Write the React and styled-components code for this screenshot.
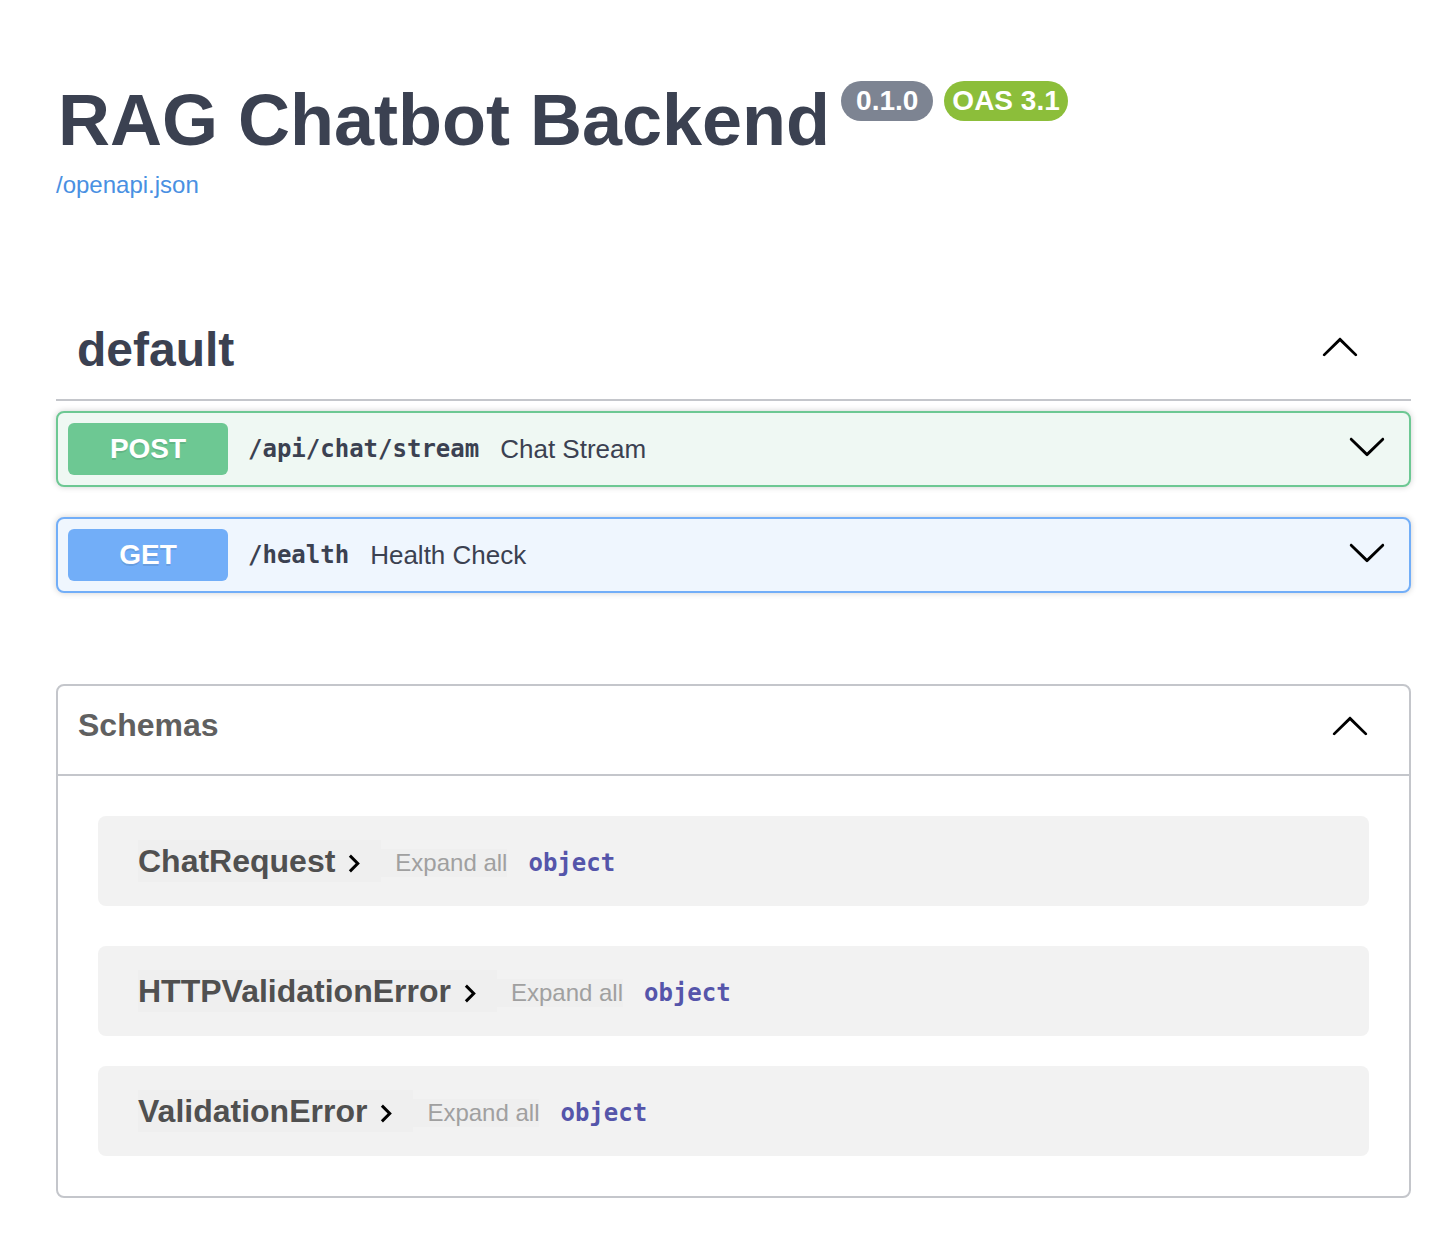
import React from 'react'
import styled, { createGlobalStyle } from 'styled-components'

const GlobalStyle = createGlobalStyle`
	body {
		margin: 0;
		background: #fff;
		font-family: 'Liberation Sans', Arial, sans-serif;
		color: #3b4151;
	}
`

const methods = {
	post: { main: '#6dc893', bg: '#eff8f3' },
	get: { main: '#72aef8', bg: '#eff6fe' },
}

const operations = [
	{ method: 'post', path: '/api/chat/stream', summary: 'Chat Stream' },
	{ method: 'get', path: '/health', summary: 'Health Check' },
]

const schemas = ['ChatRequest', 'HTTPValidationError', 'ValidationError']

const ArrowUp = ({ size = 40 }) => (
	<svg width={size} height={size} viewBox='0 0 20 20' fill='#000'>
		<path d='M17.418 14.908c.272.268.709.268.979 0s.271-.701 0-.969l-7.908-7.83c-.27-.268-.707-.268-.979 0l-7.908 7.83c-.27.268-.27.701 0 .969.271.268.709.268.979 0L10 7.767l7.418 7.141z' />
	</svg>
)

const ArrowDown = ({ size = 40 }) => (
	<svg width={size} height={size} viewBox='0 0 20 20' fill='#000'>
		<path d='M17.418 6.109c.272-.268.709-.268.979 0s.271.701 0 .969l-7.908 7.83c-.27.268-.707.268-.979 0l-7.908-7.83c-.27-.268-.27-.701 0-.969.271-.268.709-.268.979 0L10 13.25l7.418-7.141z' />
	</svg>
)

const Chevron = () => (
	<svg width='13' height='19' viewBox='8.2 5.6 8.4 12.8' fill='#000'>
		<path d='M10 6L8.59 7.41 13.17 12l-4.58 4.59L10 18l6-6z' />
	</svg>
)

const App = () => {
	return (
		<Page>
			<GlobalStyle />
			<Info>
				<TitleRow>
					<Title>RAG Chatbot Backend</Title>
					<Badge color='#7d8492' pad={15}>0.1.0</Badge>
					<Badge color='#8cbe3a' pad={8}>OAS 3.1</Badge>
				</TitleRow>
				<SpecLink href='#'>/openapi.json</SpecLink>
			</Info>

			<TagRow>
				<TagName>default</TagName>
				<TagArrow>
					<ArrowUp />
				</TagArrow>
			</TagRow>

			<Operations>
				{operations.map((op) => (
					<Opblock key={op.path} method={op.method}>
						<Method method={op.method}>{op.method.toUpperCase()}</Method>
						<Path>{op.path}</Path>
						<Summary>{op.summary}</Summary>
						<OpArrow>
							<ArrowDown />
						</OpArrow>
					</Opblock>
				))}
			</Operations>

			<Models>
				<ModelsHeader>
					<ModelsTitle>Schemas</ModelsTitle>
					<ModelsArrow>
						<ArrowUp />
					</ModelsArrow>
				</ModelsHeader>
				<ModelsBody>
					{schemas.map((name) => (
						<ModelContainer key={name}>
							<ModelTitle>
								{name}
								<Chevron />
							</ModelTitle>
							<ExpandAll>Expand all</ExpandAll>
							<PropType>object</PropType>
						</ModelContainer>
					))}
				</ModelsBody>
			</Models>
		</Page>
	)
}

const Page = styled.div`
	padding: 0 37px 62px 56px;
`

const Info = styled.div`
	padding-top: 80px;
	margin-bottom: 103px;
	display: flex;
	flex-direction: column;
	align-items: flex-start;
`

const TitleRow = styled.div`
	display: flex;
	align-items: flex-start;
`

const Title = styled.h2`
	margin: 0 11px 0 2px;
	font-size: 72px;
	line-height: 80px;
	font-weight: 700;
	color: #3b4151;
`

const Badge = styled.span`
	margin: 1px 11px 0 0;
	padding: 0 ${(p) => p.pad}px;
	height: 40px;
	line-height: 40px;
	border-radius: 20px;
	background: ${(p) => p.color};
	color: #fff;
	font-size: 28px;
	font-weight: 700;
`

const SpecLink = styled.a`
	margin-top: 11px;
	font-size: 24px;
	line-height: 28px;
	color: #4990e2;
	text-decoration: none;
`

const TagRow = styled.div`
	display: flex;
	align-items: flex-start;
	padding: 20px 51px 21px 21px;
	border-bottom: 2px solid #c4c6cb;
`

const TagName = styled.h3`
	flex: 1;
	margin: 0;
	font-size: 48px;
	line-height: 56px;
	font-weight: 700;
	color: #3b4151;
`

const TagArrow = styled.div`
	display: flex;
	margin-top: 4px;
`

const Operations = styled.div`
	display: flex;
	flex-direction: column;
	gap: 30px;
	margin-top: 10px;
`

const Opblock = styled.div`
	display: flex;
	align-items: center;
	padding: 10px 22px 10px 10px;
	border: 2px solid ${(p) => methods[p.method].main};
	border-radius: 8px;
	background: ${(p) => methods[p.method].bg};
	box-shadow: 0 0 6px rgba(0, 0, 0, 0.19);
`

const Method = styled.span`
	width: 160px;
	height: 52px;
	line-height: 52px;
	border-radius: 6px;
	background: ${(p) => methods[p.method].main};
	color: #fff;
	font-size: 28px;
	font-weight: 700;
	text-align: center;
	text-shadow: 0 2px 0 rgba(0, 0, 0, 0.1);
`

const Path = styled.span`
	margin-left: 20px;
	font-family: 'DejaVu Sans Mono', Menlo, monospace;
	font-size: 24px;
	font-weight: 700;
	color: #3b4151;
`

const Summary = styled.span`
	flex: 1;
	margin-left: 21px;
	font-size: 26px;
	color: #3b4151;
`

const OpArrow = styled.div`
	display: flex;
	margin-bottom: 6px;
`

const Models = styled.section`
	margin-top: 91px;
	border: 2px solid #c4c6cb;
	border-radius: 8px;
`

const ModelsHeader = styled.div`
	display: flex;
	align-items: flex-start;
	height: 90px;
	box-sizing: border-box;
	padding: 19px 39px 0 20px;
	border-bottom: 2px solid #c4c6cb;
`

const ModelsTitle = styled.h4`
	flex: 1;
	margin: 2px 0 0;
	font-size: 32px;
	line-height: 37px;
	font-weight: 700;
	color: #606060;
`

const ModelsArrow = styled.div`
	display: flex;
`

const ModelsBody = styled.div`
	display: flex;
	flex-direction: column;
	padding: 0 40px 30px;
`

const ModelContainer = styled.div`
	display: flex;
	align-items: center;
	height: 90px;
	margin-bottom: 30px;
	padding: 0 40px;
	border-radius: 8px;
	background: #f2f2f2;

	&:first-child {
		margin-top: 40px;
		margin-bottom: 40px;
	}
	&:last-child {
		margin-bottom: 10px;
	}
`

const ModelTitle = styled.span`
	display: flex;
	align-items: center;
	gap: 13px;
	height: 42px;
	padding-right: 20px;
	background: rgba(0, 0, 0, 0.012);
	font-size: 32px;
	font-weight: 700;
	color: #505050;

	svg {
		margin-top: 4px;
	}
`

const ExpandAll = styled.span`
	display: flex;
	align-items: center;
	height: 28px;
	margin-top: 4px;
	padding: 0 0 0 14px;
	background: rgba(0, 0, 0, 0.012);
	font-size: 24px;
	color: #a0a0a0;
`

const PropType = styled.span`
	margin: 4px 0 0 21px;
	font-family: 'DejaVu Sans Mono', Menlo, monospace;
	font-size: 24px;
	font-weight: 700;
	color: #55a;
`

export default App
